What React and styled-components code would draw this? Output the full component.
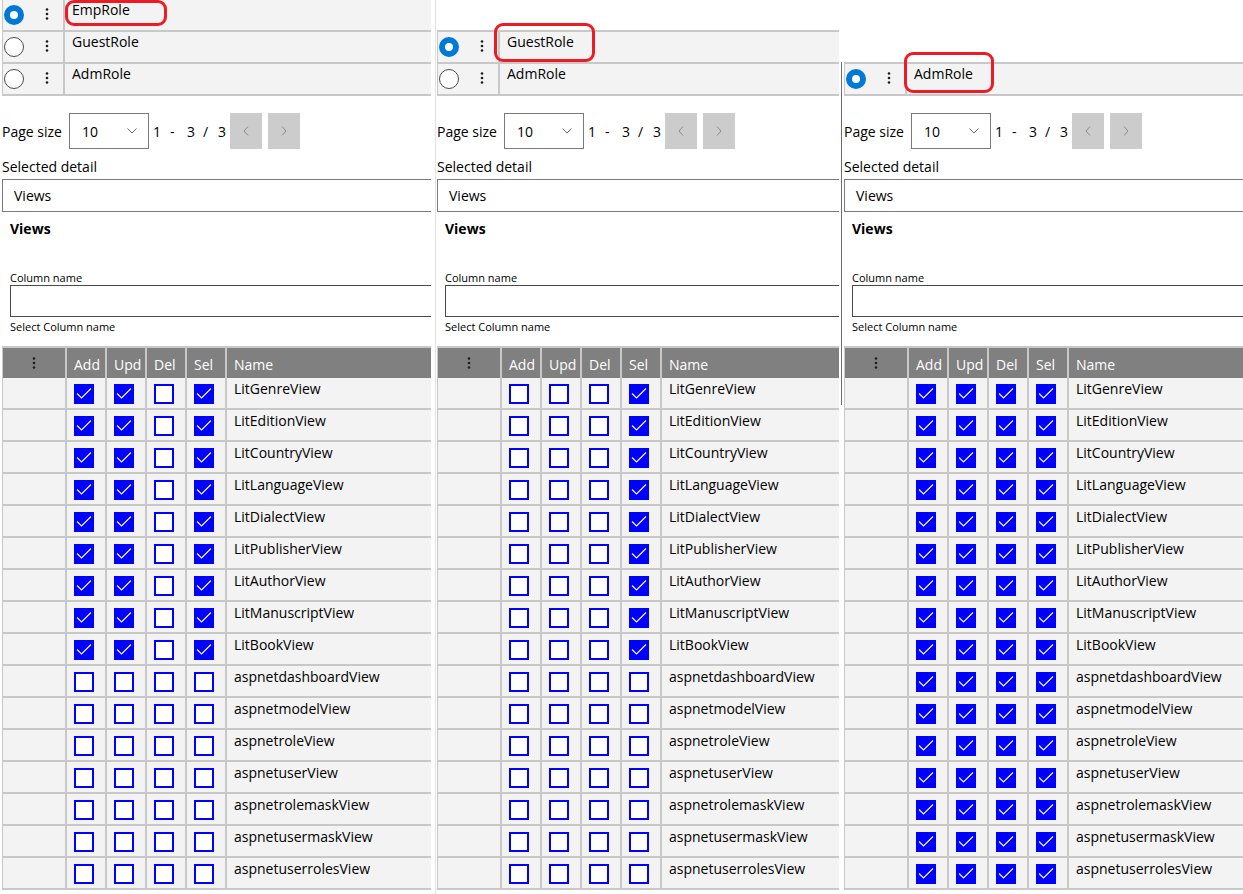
import React from "react";
import styled, { createGlobalStyle } from "styled-components";

const GlobalStyle = createGlobalStyle`
  html, body {
    margin: 0;
    padding: 0;
    background: #ffffff;
  }
  body {
    font-family: "Open Sans", "Noto Sans", sans-serif;
    font-size: 14px;
    color: #000000;
  }
`;

const ROLES = ["EmpRole", "GuestRole", "AdmRole"];

const VIEWS = [
  "LitGenreView",
  "LitEditionView",
  "LitCountryView",
  "LitLanguageView",
  "LitDialectView",
  "LitPublisherView",
  "LitAuthorView",
  "LitManuscriptView",
  "LitBookView",
  "aspnetdashboardView",
  "aspnetmodelView",
  "aspnetroleView",
  "aspnetuserView",
  "aspnetrolemaskView",
  "aspnetusermaskView",
  "aspnetuserrolesView",
];

// which of add / upd / del / sel is granted, per role
const rights = (role, view) => {
  const lit = view.startsWith("Lit");
  if (role === "AdmRole") return [true, true, true, true];
  if (role === "GuestRole") return [false, false, false, lit];
  return [lit, lit, false, lit];
};

const PANELS = [
  { role: "EmpRole", skip: 0, width: "429px", mark: { left: 62, top: 0, width: 102, height: 26 } },
  { role: "GuestRole", skip: 1, width: "402px", mark: { left: 56, top: -9, width: 101, height: 39 } },
  { role: "AdmRole", skip: 2, width: "auto", mark: { left: 59, top: -12, width: 90, height: 41 } },
];

export default function App() {
  return (
    <>
      <GlobalStyle />
      <Page>
        {PANELS.map((p, i) => (
          <React.Fragment key={p.role}>
            {i === 1 && <Gutter $w={6} $line="#e2e2e2" $top={0} $height="100%" $offset={4} />}
            {i === 2 && <Gutter $w={5} $line="#6e6e6e" $top={62} $height="343px" $offset={2} />}
            <RolePanel {...p} first={i === 0} />
          </React.Fragment>
        ))}
      </Page>
    </>
  );
}

function RolePanel({ role, skip, width, mark, first }) {
  const visible = ROLES.slice(skip);
  return (
    <Panel $width={width} $first={first}>
      {skip > 0 && <Scrolled $height={skip * 32 - 2} />}
      {visible.map((r) => (
        <RoleRow key={r}>
          <RoleTools>
            <Radio $on={r === role} />
            <Dots />
          </RoleTools>
          <RoleName>{r}</RoleName>
          {r === role && (
            <Mark
              style={{ left: mark.left, top: mark.top, width: mark.width, height: mark.height }}
            />
          )}
        </RoleRow>
      ))}

      <Pager>
        <PagerLabel>Page size</PagerLabel>
        <SizeSelect>
          <span>10</span>
          <svg width="10" height="6" viewBox="0 0 10 6">
            <polyline points="0.5,0.5 5,5 9.5,0.5" fill="none" stroke="#6a6a6a" strokeWidth="1" />
          </svg>
        </SizeSelect>
        <Range>
          <span>1</span>
          <span>-</span>
          <span>3</span>
          <span>/</span>
          <span>3</span>
        </Range>
        <PageButtons>
          <PageButton>
            <svg width="6" height="10" viewBox="0 0 6 10">
              <polyline points="5,0.5 1,5 5,9.5" fill="none" stroke="#8a8a8a" strokeWidth="1" />
            </svg>
          </PageButton>
          <PageButton>
            <svg width="6" height="10" viewBox="0 0 6 10">
              <polyline points="1,0.5 5,5 1,9.5" fill="none" stroke="#8a8a8a" strokeWidth="1" />
            </svg>
          </PageButton>
        </PageButtons>
      </Pager>

      <FieldLabel>Selected detail</FieldLabel>
      <DetailSelect>Views</DetailSelect>

      <Section>
        <SectionTitle>Views</SectionTitle>
        <SmallLabel>Column name</SmallLabel>
        <TextBox />
        <SmallLabel $hint>Select Column name</SmallLabel>
      </Section>

      <Grid>
        <GridRow $head>
          <Cell $head $center>
            <Dots />
          </Cell>
          <Cell $head>Add</Cell>
          <Cell $head>Upd</Cell>
          <Cell $head>Del</Cell>
          <Cell $head>Sel</Cell>
          <Cell $head>Name</Cell>
        </GridRow>
        {VIEWS.map((v) => (
          <GridRow key={v}>
            <Cell />
            {rights(role, v).map((on, k) => (
              <Cell key={k}>
                <Check $on={on}>
                  {on && (
                    <svg width="20" height="20" viewBox="0 0 20 20">
                      <polyline
                        points="3,9.5 7.5,14 17,4.5"
                        fill="none"
                        stroke="#ffffff"
                        strokeWidth="1.1"
                      />
                    </svg>
                  )}
                </Check>
              </Cell>
            ))}
            <Cell $name>{v}</Cell>
          </GridRow>
        ))}
      </Grid>
    </Panel>
  );
}

const Dots = () => (
  <svg width="4" height="14" viewBox="0 0 4 14">
    <circle cx="2" cy="2.5" r="1.3" fill="#1e1e1e" />
    <circle cx="2" cy="7" r="1.3" fill="#1e1e1e" />
    <circle cx="2" cy="11.5" r="1.3" fill="#1e1e1e" />
  </svg>
);

const Page = styled.div`
  display: flex;
  align-items: stretch;
  height: 894px;
  overflow: hidden;
`;

const Gutter = styled.div`
  flex: 0 0 ${(p) => p.$w}px;
  display: flex;
  flex-direction: column;
  padding-top: ${(p) => p.$top}px;
  padding-left: ${(p) => p.$offset}px;
  box-sizing: border-box;

  &::before {
    content: "";
    display: block;
    width: 1px;
    height: ${(p) => p.$height};
    background: ${(p) => p.$line};
  }
`;

const Panel = styled.div`
  flex: ${(p) => (p.$width === "auto" ? "1 1 auto" : `0 0 ${p.$width}`)};
  min-width: 0;
  margin-left: ${(p) => (p.$first ? "2px" : "0")};
  display: flex;
  flex-direction: column;
  overflow: hidden;
`;

const Scrolled = styled.div`
  height: ${(p) => p.$height}px;
  flex: none;
  border-bottom: 2px solid #c8c8c8;
`;

const RoleRow = styled.div`
  position: relative;
  display: flex;
  height: 30px;
  flex: none;
  background: #f3f3f3;
  border-left: 1px solid #c8c8c8;
  border-bottom: 2px solid #c8c8c8;
`;

const RoleTools = styled.div`
  width: 62px;
  display: flex;
  align-items: center;
  border-right: 2px solid #c8c8c8;
  padding-left: 1px;
  box-sizing: border-box;
  gap: 21px;
  svg {
    margin-top: -2px;
  }
`;

const Radio = styled.span`
  width: 20px;
  height: 20px;
  box-sizing: border-box;
  border-radius: 50%;
  background: #ffffff;
  border: ${(p) => (p.$on ? "6px solid #0078d7" : "1px solid #4a4a4a")};
`;

const RoleName = styled.div`
  padding: 0 0 0 7px;
  font-size: 14px;
  line-height: 20px;
`;

const Mark = styled.div`
  position: absolute;
  box-sizing: border-box;
  border: 3px solid #ed1c24;
  border-radius: 9px;
  pointer-events: none;
`;

const Pager = styled.div`
  display: flex;
  align-items: center;
  height: 36px;
  margin-top: 17px;
  flex: none;
`;

const PagerLabel = styled.span`
  width: 67px;
  font-size: 14px;
`;

const SizeSelect = styled.div`
  width: 80px;
  height: 36px;
  box-sizing: border-box;
  border: 1px solid #7a7a7a;
  display: flex;
  align-items: center;
  justify-content: space-between;
  padding: 0 11px 0 12px;
  font-size: 14px;
`;

const Range = styled.div`
  display: grid;
  grid-template-columns: 17px 17px 16px 15px 10px;
  margin-left: 4px;
  font-size: 14px;
`;

const PageButtons = styled.div`
  display: flex;
  gap: 6px;
  margin-left: 2px;
`;

const PageButton = styled.div`
  width: 32px;
  height: 36px;
  background: #cccccc;
  display: flex;
  align-items: center;
  justify-content: center;
`;

const FieldLabel = styled.div`
  margin-top: 8px;
  font-size: 14px;
  line-height: 20px;
`;

const DetailSelect = styled.div`
  margin-top: 2px;
  width: calc(100% + 20px);
  height: 33px;
  box-sizing: border-box;
  border: 1px solid #7a7a7a;
  padding-left: 11px;
  display: flex;
  align-items: center;
  font-size: 14px;
`;

const Section = styled.div`
  padding-left: 8px;
  display: flex;
  flex-direction: column;
`;

const SectionTitle = styled.div`
  margin-top: 7px;
  font-size: 14px;
  line-height: 20px;
  font-weight: 700;
  margin-bottom: 31px;
`;

const SmallLabel = styled.div`
  font-size: 11px;
  line-height: 15px;
  margin-top: ${(p) => (p.$hint ? "2px" : "0")};
`;

const TextBox = styled.div`
  width: calc(100% + 20px);
  height: 32px;
  box-sizing: border-box;
  border: 1px solid #4a4a4a;
  background: #ffffff;
`;

const Grid = styled.div`
  margin-top: 12px;
  display: flex;
  flex-direction: column;
  border-top: 2px solid #c8c8c8;
`;

const GridRow = styled.div`
  display: grid;
  grid-template-columns: 62px 38px 38px 38px 38px 1fr;
  column-gap: 2px;
  height: 30px;
  padding-left: 1px;
  padding-bottom: ${(p) => (p.$head ? "0" : "2px")};
  background: #c8c8c8;
  flex: none;
`;

const Cell = styled.div`
  background: ${(p) => (p.$head ? "#808080" : "#f3f3f3")};
  color: ${(p) => (p.$head ? "#ffffff" : "#000000")};
  display: flex;
  justify-content: ${(p) => (p.$center ? "center" : "flex-start")};
  align-items: flex-start;
  padding: ${(p) => (p.$head ? (p.$center ? "8px 0 0" : "7px 0 0 7px") : p.$name ? "1px 0 0 7px" : "6px 0 0 7px")};
  font-size: 14px;
  line-height: 20px;
  white-space: nowrap;
  overflow: hidden;
`;

const Check = styled.span`
  width: 20px;
  height: 20px;
  box-sizing: border-box;
  border: ${(p) => (p.$on ? "none" : "2px solid #0000ff")};
  background: ${(p) => (p.$on ? "#0000ff" : "#ffffff")};
  display: block;
  svg {
    display: block;
  }
`;
